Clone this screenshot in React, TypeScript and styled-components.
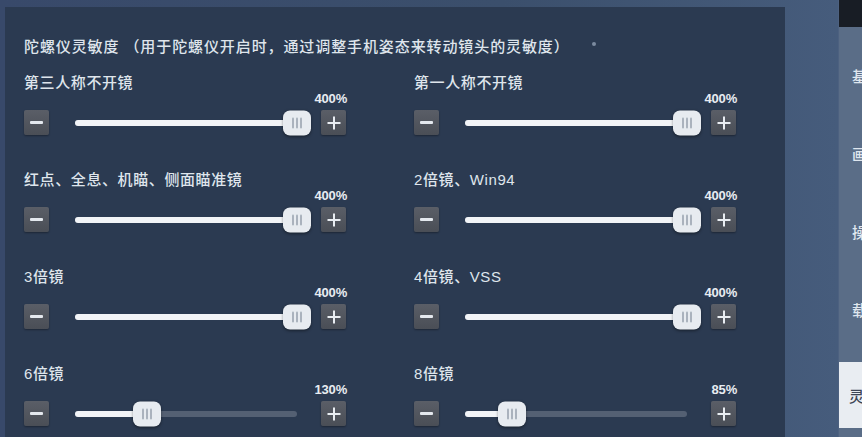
import React from 'react'
import styled, { createGlobalStyle } from 'styled-components'

const GlobalStyle = createGlobalStyle`
  html, body {
    margin: 0;
    padding: 0;
    width: 862px;
    height: 437px;
    overflow: hidden;
    background: #3b4f6c;
  }
  * {
    box-sizing: border-box;
  }
`

type SliderItem = {
  label: string
  value: number
}

const ITEMS: SliderItem[] = [
  { label: '第三人称不开镜', value: 400 },
  { label: '第一人称不开镜', value: 400 },
  { label: '红点、全息、机瞄、侧面瞄准镜', value: 400 },
  { label: '2倍镜、Win94', value: 400 },
  { label: '3倍镜', value: 400 },
  { label: '4倍镜、VSS', value: 400 },
  { label: '6倍镜', value: 130 },
  { label: '8倍镜', value: 85 },
]

const MENU = ['基础设置', '画面设置', '操作设置', '载具设置']

const Slider = ({ label, value }: SliderItem) => {
  const pct = (value / 400) * 100
  return (
    <Cell>
      <Label>{label}</Label>
      <ValueRow>
        <Value>{value}%</Value>
      </ValueRow>
      <SliderRow>
        <StepButton>
          <MinusBar />
        </StepButton>
        <Track>
          <Fill style={{ width: `${pct}%` }} />
          <Thumb style={{ left: `calc(${pct}% - 14px)` }}>
            <Grip />
            <Grip />
            <Grip />
          </Thumb>
        </Track>
        <StepButton>
          <PlusIcon viewBox="0 0 16 16">
            <path d="M8 1.5v13M1.5 8h13" stroke="#e9edf2" strokeWidth="2" fill="none" />
          </PlusIcon>
        </StepButton>
      </SliderRow>
    </Cell>
  )
}

const App = () => {
  return (
    <>
      <GlobalStyle />
      <Page>
        <Main>
          <Panel>
            <Title>
              陀螺仪灵敏度 （用于陀螺仪开启时，通过调整手机姿态来转动镜头的灵敏度）
              <Dot />
            </Title>
            <Grid>
              {ITEMS.map((item) => (
                <Slider key={item.label} {...item} />
              ))}
            </Grid>
          </Panel>
        </Main>
        <Sidebar>
          <SideTop />
          <MenuList>
            {MENU.map((m) => (
              <MenuItem key={m}>{m}</MenuItem>
            ))}
            <MenuItem $active>灵敏度设置</MenuItem>
          </MenuList>
        </Sidebar>
      </Page>
    </>
  )
}

export default App

const Page = styled.div`
  display: flex;
  width: 862px;
  height: 437px;
  font-family: 'Liberation Sans', 'Noto Sans CJK SC', sans-serif;
  color: #dfe5ec;
`

const Main = styled.div`
  flex: 1;
  padding: 7px 53px 0 5px;
  background: linear-gradient(90deg, #38496a 0%, #3b4f6c 60%, #465c7c 100%);
`

const Panel = styled.div`
  height: 100%;
  padding: 28px 0 0 19px;
  background: #2b3a51;
`

const Title = styled.div`
  display: flex;
  align-items: center;
  height: 20px;
  font-size: 15px;
  font-weight: 500;
  letter-spacing: 0.9px;
  white-space: nowrap;
`

const Dot = styled.span`
  width: 4px;
  height: 4px;
  margin-left: 22px;
  margin-top: -3px;
  border-radius: 50%;
  background: #7c8ba0;
`

const Grid = styled.div`
  display: grid;
  grid-template-columns: 390px 1fr;
  row-gap: 35px;
  margin-top: 18px;
`

const Cell = styled.div`
  display: flex;
  flex-direction: column;
`

const Label = styled.div`
  height: 20px;
  line-height: 20px;
  font-size: 15px;
  font-weight: 500;
  letter-spacing: 0.6px;
  white-space: nowrap;
`

const ValueRow = styled.div`
  display: flex;
  justify-content: flex-end;
  width: 323px;
  margin-bottom: 5px;
`

const Value = styled.div`
  height: 12px;
  line-height: 12px;
  font-size: 13px;
  font-weight: 700;
  color: #e8ecf1;
  letter-spacing: -0.2px;
`

const SliderRow = styled.div`
  display: flex;
  align-items: center;
  height: 25px;
`

const StepButton = styled.div`
  display: flex;
  align-items: center;
  justify-content: center;
  width: 25px;
  height: 25px;
  border-radius: 2px;
  background: linear-gradient(180deg, #5a5e67 0%, #4a4e56 100%);
  box-shadow: 0 1px 2px rgba(0, 0, 0, 0.35);
`

const MinusBar = styled.div`
  width: 13px;
  height: 3px;
  border-radius: 1px;
  background: #e4e8ee;
`

const PlusIcon = styled.svg`
  width: 16px;
  height: 16px;
`

const Track = styled.div`
  position: relative;
  width: 222px;
  height: 6px;
  margin: 0 24px 0 26px;
  border-radius: 3px;
  background: rgba(118, 128, 144, 0.55);
`

const Fill = styled.div`
  height: 100%;
  border-radius: 3px;
  background: #f2f4f7;
`

const Thumb = styled.div`
  position: absolute;
  top: 50%;
  display: flex;
  align-items: center;
  justify-content: center;
  gap: 2px;
  width: 28px;
  height: 25px;
  border-radius: 7px;
  background: #e7ebf0;
  transform: translateY(-50%);
  box-shadow: 0 1px 3px rgba(0, 0, 0, 0.4);
`

const Grip = styled.span`
  width: 2px;
  height: 11px;
  border-radius: 1px;
  background: #aab2bd;
`

const Sidebar = styled.div`
  display: flex;
  flex-direction: column;
  width: 24px;
  overflow: hidden;
  background: #5a6d87;
  border-left: 1px solid #4d6180;
`

const SideTop = styled.div`
  height: 27px;
  background: #181d25;
`

const MenuList = styled.div`
  display: flex;
  flex-direction: column;
  padding-top: 9px;
`

const MenuItem = styled.div<{ $active?: boolean }>`
  display: flex;
  align-items: center;
  height: ${({ $active }) => ($active ? '66px' : '78px')};
  margin-top: ${({ $active }) => ($active ? '14px' : '0')};
  padding-left: ${({ $active }) => ($active ? '10px' : '13px')};
  font-size: 15px;
  font-weight: 500;
  white-space: nowrap;
  color: ${({ $active }) => ($active ? '#3d4656' : '#dfe6ee')};
  background: ${({ $active }) => ($active ? '#e9edf2' : 'transparent')};
`
